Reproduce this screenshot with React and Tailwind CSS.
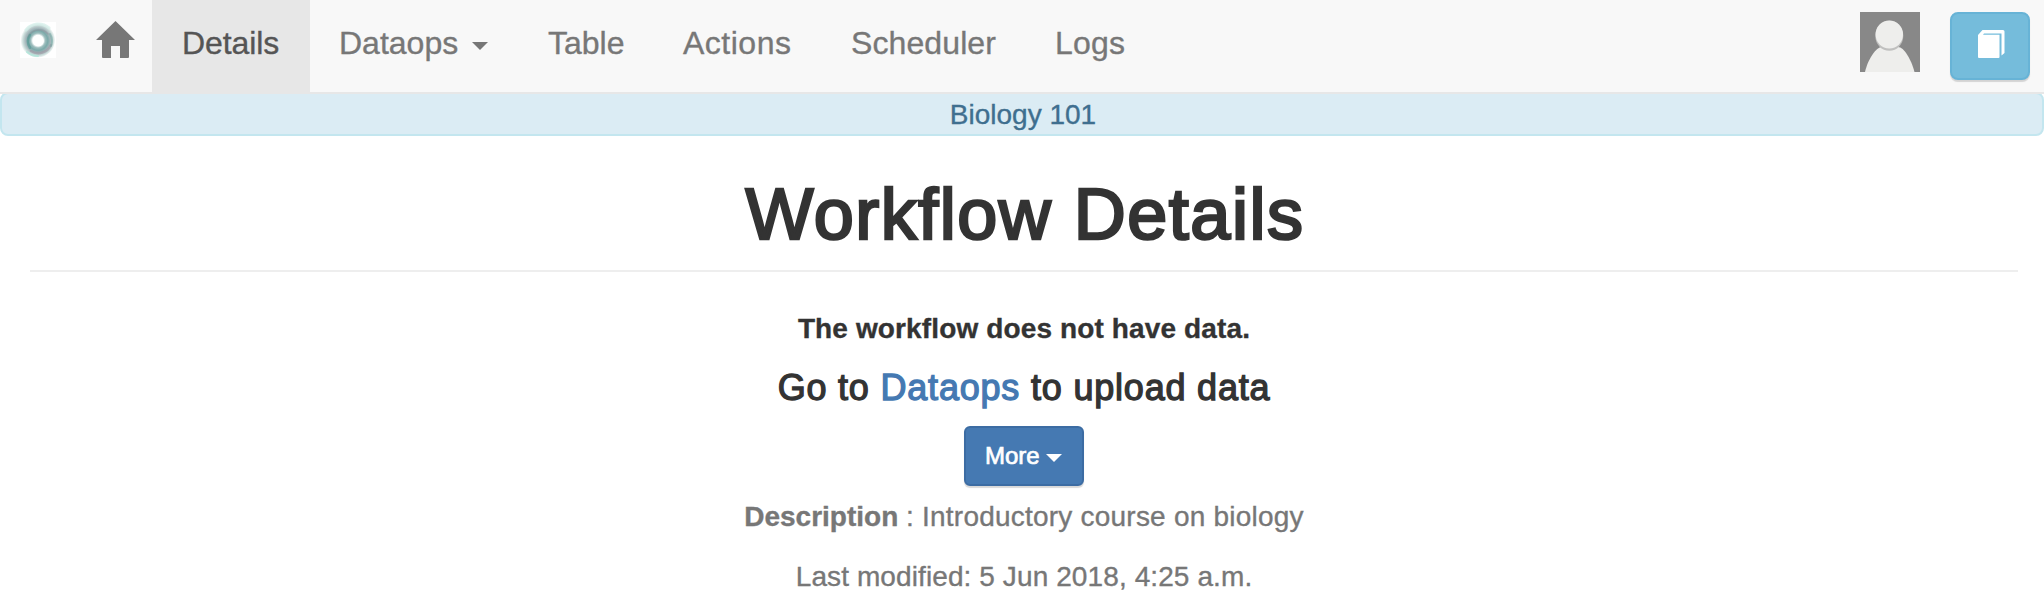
function Caret({ className }) {
  return (
    <svg viewBox="0 0 16 8" className={className} fill="currentColor" aria-hidden="true">
      <path d="M0 0H16L8 8Z" />
    </svg>
  );
}

function Logo() {
  return (
    <svg viewBox="0 0 36 36" className="h-9 w-9 shrink-0" aria-hidden="true">
      <defs>
        <radialGradient id="ring" gradientUnits="userSpaceOnUse" cx="18" cy="18.5" r="17.5">
          <stop offset="0.3" stopColor="#fff" />
          <stop offset="0.42" stopColor="#9dbdbd" />
          <stop offset="0.56" stopColor="#7ba9a9" />
          <stop offset="0.72" stopColor="#a9b9bd" />
          <stop offset="0.86" stopColor="#c9dcda" />
          <stop offset="1" stopColor="#fff" />
        </radialGradient>
      </defs>
      <rect width="36" height="36" fill="#fff" />
      <circle cx="17.500" cy="18" r="17.5" fill="url(#ring)" />
      <g fill="none" strokeLinecap="round">
        <path d="M6 8A16 16 0 0 1 29 6" stroke="#d3eee8" strokeWidth="3" opacity=".7" />
        <path d="M8 15A12 12 0 0 1 28 12" stroke="#8f8d98" strokeWidth="1.6" opacity=".45" />
        <path d="M10 26A12 12 0 0 1 10 13" stroke="#4f9690" strokeWidth="2.6" opacity=".55" />
        <path d="M11 29A14 14 0 0 0 31 23" stroke="#9a93a0" strokeWidth="2.6" opacity=".55" />
        <path d="M31 24A14 14 0 0 0 30 12" stroke="#69a39e" strokeWidth="2" opacity=".5" />
        <path d="M7 30A16 16 0 0 0 18 34" stroke="#aee5d8" strokeWidth="2" opacity=".8" />
      </g>
      <circle cx="18.5" cy="19" r="5.2" fill="#fff" />
    </svg>
  );
}

function Home() {
  return (
    <svg viewBox="0 0 39 37" className="h-[37px] w-[39px] shrink-0" fill="#777" aria-hidden="true">
      <path d="M19.5 0L39 19H33V36Q33 37 32 37H24V25H15V37H7Q6 37 6 36V19H0Z" />
    </svg>
  );
}

function Avatar() {
  return (
    <svg viewBox="0 0 60 60" className="h-15 w-15 shrink-0" aria-hidden="true">
      <rect width="60" height="60" fill="#888" />
      <path d="M5 60C8 47 16 35 22 35H38C44 35 51 47 54.500 60Z" fill="#eeeeec" />
      <ellipse cx="29.300" cy="23.800" rx="14" ry="15" fill="#c0c0bf" />
      <ellipse cx="29.300" cy="22.500" rx="13.700" ry="14" fill="#eeeeec" />
    </svg>
  );
}

function Book() {
  return (
    <svg viewBox="0 0 27 28" className="h-7 w-[27px]" fill="#fff" aria-hidden="true">
      <path d="M0 5L4.500 0H25Q26.500 0 26.500 1.500V23L23.500 25.500V3.500H6L5 4.700H21.500V27Q21.500 28 20.500 28H1Q0 28 0 27Z" />
    </svg>
  );
}

export default function App() {
  return (
    <div className="h-[602px] overflow-hidden bg-white font-['Liberation_Sans',Arial,sans-serif] text-[#333] [-webkit-text-stroke:0.35px_currentColor]">
      <nav className="relative z-10 flex h-[94px] items-start border-b-2 border-[#e7e7e7] bg-[#f8f8f8] text-[32px] leading-10 text-[#777]">
        <div className="flex w-[152px] gap-10 pt-[21px] pl-5">
          <div className="pt-px"><Logo /></div>
          <Home />
        </div>
        <a className="h-[92px] w-[158px] bg-[#e7e7e7] pt-[23px] pl-[30px] tracking-[-0.1px] text-[#555]">Details</a>
        <a className="flex w-[208px] pt-[23px] pl-[29px]">
          Dataops
          <Caret className="mt-[19px] ml-[14px] h-2 w-4" />
        </a>
        <a className="w-[135px] pt-[23px] pl-[30px]">Table</a>
        <a className="w-[168px] pt-[23px] pl-[30px] tracking-[0.5px]">Actions</a>
        <a className="w-[204px] pt-[23px] pl-[30px] tracking-[0.1px]">Scheduler</a>
        <a className="pt-[23px] pl-[30px] tracking-[0.2px]">Logs</a>
        <div className="ml-auto flex gap-[30px] pt-3 pr-3.5">
          <Avatar />
          <button className="flex h-[68px] w-20 justify-center rounded-lg border-2 border-[#67b3d6] bg-[#75bcdb] pt-4 pl-[3px] shadow-[0_2px_1px_rgba(0,0,0,0.15)]">
            <Book />
          </button>
        </div>
      </nav>

      <div className="-mt-0.5 h-11 rounded-lg border-2 border-[#c3e6ef] bg-[#dbecf4] pt-px pl-0.5 text-center text-[28px] leading-10 text-[#3f6f8f]">
        Biology 101
      </div>

      <main className="mr-[26px] ml-[30px] flex flex-col items-center text-[28px] leading-10">
        <h1 className="mt-[38px] pl-0.5 text-[72px] leading-20 tracking-[1.5px] [-webkit-text-stroke:2.6px_#333]">
          Workflow Details
        </h1>
        <hr className="mt-4 w-full border-t-2 border-[#eee]" />
        <p className="mt-[37px] font-bold tracking-[0.13px]">The workflow does not have data.</p>
        <h3 className="mt-[19px] text-[36px] tracking-[0.8px] [-webkit-text-stroke:1.3px_currentColor]">
          Go to <a className="text-[#4579b2]">Dataops</a> to upload data
        </h3>
        <button className="mt-[18px] flex h-[60px] w-[120px] rounded-md border-2 border-[#3c6ca3] bg-[#4579b2] pt-2 pl-[19px] text-2xl leading-10 text-white shadow-[0_2px_1px_rgba(0,0,0,0.15)] [-webkit-text-stroke:0.7px_#fff]">
          More
          <Caret className="mt-[18px] ml-[6px] h-2 w-4" />
        </button>
        <p className="mt-[11px] text-[#777]">
          <strong>Description</strong> <span className="tracking-[0.22px]">: Introductory course on biology</span>
        </p>
        <p className="mt-5 tracking-[0.1px] text-[#777]">Last modified: 5 Jun 2018, 4:25 a.m.</p>
      </main>
    </div>
  );
}
